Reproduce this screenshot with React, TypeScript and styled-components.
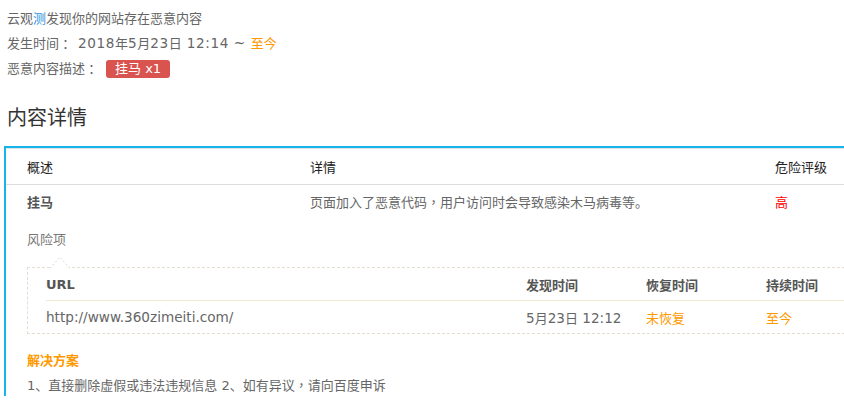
import React from "react";
import styled, { createGlobalStyle } from "styled-components";

const Global = createGlobalStyle`
  html, body { margin: 0; padding: 0; background: #fff; overflow: hidden; }
  body { font-family: "DejaVu Sans", "Noto Sans CJK SC", sans-serif; font-size: 13px; color: #666; }
`;

const Page = styled.div`
  width: 900px;
  padding: 6px 0 0 7px;
  box-sizing: border-box;
`;

const InfoLine = styled.div`
  line-height: 25px;
  height: 25px;
  display: flex;
  align-items: center;
  white-space: pre;
`;

const Fw = styled.span<{ $gap?: number }>`
  font-family: "Noto Sans CJK TC", sans-serif;
  display: inline-block;
  width: 1em;
  text-align: center;
  margin-right: ${(p) => p.$gap ?? 0}px;
`;

const Latin = styled.span<{ $spacing?: number }>`
  font-size: 13.6px;
  letter-spacing: ${(p) => p.$spacing ?? 0}px;
`;

const Blue = styled.span`
  color: #2f8fe0;
`;

const Orange = styled.span`
  color: #f90;
`;

const Badge = styled.span`
  display: inline-block;
  background: #d9534f;
  color: #fff;
  border-radius: 3px;
  padding: 0 9px;
  height: 18px;
  line-height: 18px;
  font-size: 13px;
  margin-left: 1px;
`;

const Heading = styled.h2`
  margin: 22px 0 0 0;
  font-weight: normal;
  font-size: 20px;
  line-height: 30px;
  color: #333;
`;

const Panel = styled.div`
  margin: 13px 0 0 -3px;
  border-top: 2px solid #13b5ea;
  border-left: 2px solid #13b5ea;
`;

const Grid = styled.div`
  display: grid;
  grid-template-columns: 283px 465px 1fr;
  padding-left: 21px;
`;

const HeadRow = styled(Grid)`
  border-top: 1px solid #e4e4e4;
  border-bottom: 1px solid #dcdcdc;
  height: 35px;
  align-items: center;
  color: #222;
`;

const BodyRow = styled(Grid)`
  height: 32px;
  align-items: center;
  color: #666;
`;

const Strong = styled.span`
  font-weight: bold;
  color: #555;
`;

const Red = styled.span`
  color: #f00;
`;

const Section = styled.div`
  padding-left: 21px;
`;

const RiskLabel = styled.div`
  margin-top: 13px;
  line-height: 20px;
  color: #777;
`;

const DashedBox = styled.div`
  position: relative;
  margin-top: 17px;
  border: 1px dashed #e4ddd0;
  border-right: none;
  padding-left: 18px;
`;

const Notch = styled.svg`
  position: absolute;
  left: 22px;
  top: -12px;
`;

const RiskGrid = styled.div`
  display: grid;
  grid-template-columns: 480px 120px 120px 1fr;
  height: 32px;
  align-items: center;
`;

const RiskHead = styled(RiskGrid)`
  font-weight: bold;
  color: #555;
  border-bottom: 1px solid #f3e7d6;
`;

const RiskBody = styled(RiskGrid)`
  color: #666;
`;

const SolutionTitle = styled.div`
  margin-top: 17px;
  line-height: 20px;
  color: #f90;
  font-weight: bold;
`;

const SolutionText = styled.div`
  margin-top: 4px;
  line-height: 20px;
  color: #666;
`;

export default function App() {
  return (
    <>
      <Global />
      <Page>
        <InfoLine>
          云观<Blue>测</Blue>发现你的网站存在恶意内容
        </InfoLine>
        <InfoLine>
          发生时间<Fw $gap={6}>：</Fw>
          <Latin $spacing={0.6}>2018</Latin>年<Latin $spacing={0.6}>5</Latin>月
          <Latin $spacing={0.6}>23</Latin>日<Latin $spacing={0.6}> 12:14 ~ </Latin>
          <Orange>至今</Orange>
        </InfoLine>
        <InfoLine>
          恶意内容描述<Fw $gap={7}>：</Fw>
          <Badge>挂马 x1</Badge>
        </InfoLine>
        <Heading>内容详情</Heading>
        <Panel>
          <HeadRow>
            <span>概述</span>
            <span>详情</span>
            <span>危险评级</span>
          </HeadRow>
          <BodyRow>
            <Strong>挂马</Strong>
            <span>
              页面加入了恶意代码<Fw>，</Fw>用户访问时会导致感染木马病毒等。
            </span>
            <Red>高</Red>
          </BodyRow>
          <Section>
            <RiskLabel>风险项</RiskLabel>
            <DashedBox>
              <Notch width="20" height="13" viewBox="0 0 20 13">
                <polygon points="0,13 10,1 20,13" fill="#fff" />
                <polyline
                  points="0,12.5 10,1 20,12.5"
                  fill="none"
                  stroke="#e0dbd2"
                  strokeWidth="1"
                  strokeDasharray="2 2"
                />
              </Notch>
              <RiskHead>
                <span>URL</span>
                <span>发现时间</span>
                <span>恢复时间</span>
                <span>持续时间</span>
              </RiskHead>
              <RiskBody>
                <Latin>http://www.360zimeiti.com/</Latin>
                <span>
                  <Latin>5</Latin>月<Latin>23</Latin>日<Latin> 12:12</Latin>
                </span>
                <Orange>未恢复</Orange>
                <Orange>至今</Orange>
              </RiskBody>
            </DashedBox>
            <SolutionTitle>解决方案</SolutionTitle>
            <SolutionText>
              1、直接删除虚假或违法违规信息 2、如有异议<Fw>，</Fw>请向百度申诉
            </SolutionText>
          </Section>
        </Panel>
      </Page>
    </>
  );
}
